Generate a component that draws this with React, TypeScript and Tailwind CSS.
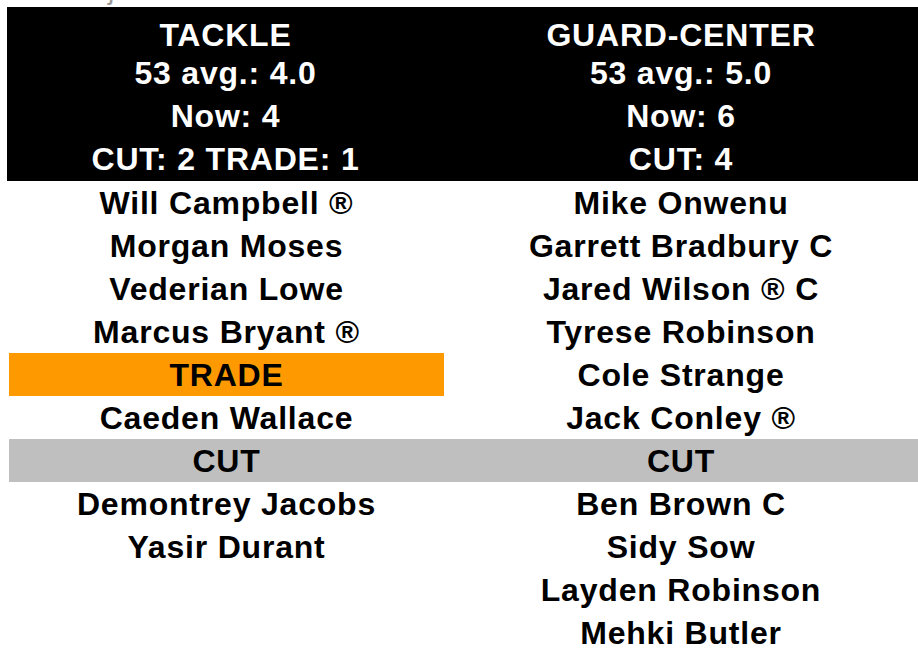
const header = [
  ["TACKLE", "GUARD-CENTER"],
  ["53 avg.: 4.0", "53 avg.: 5.0"],
  ["Now: 4", "Now: 6"],
  ["CUT: 2 TRADE: 1", "CUT: 4"],
];

type Cell = { text: string; tone?: "trade" | "cut" };

const rows: [Cell, Cell][] = [
  [{ text: "Will Campbell ®" }, { text: "Mike Onwenu" }],
  [{ text: "Morgan Moses" }, { text: "Garrett Bradbury C" }],
  [{ text: "Vederian Lowe" }, { text: "Jared Wilson ® C" }],
  [{ text: "Marcus Bryant ®" }, { text: "Tyrese Robinson" }],
  [{ text: "TRADE", tone: "trade" }, { text: "Cole Strange" }],
  [{ text: "Caeden Wallace" }, { text: "Jack Conley ®" }],
  [{ text: "CUT", tone: "cut" }, { text: "CUT", tone: "cut" }],
  [{ text: "Demontrey Jacobs" }, { text: "Ben Brown C" }],
  [{ text: "Yasir Durant" }, { text: "Sidy Sow" }],
  [{ text: "" }, { text: "Layden Robinson" }],
  [{ text: "" }, { text: "Mehki Butler" }],
];

function BodyCell({ cell }: { cell: Cell }) {
  const bg =
    cell.tone === "trade"
      ? "bg-[#ff9900]"
      : cell.tone === "cut"
      ? "bg-[#bfbfbf]"
      : "bg-white";
  return (
    <div className={`${bg} h-[43px] flex items-center justify-center whitespace-nowrap`}>
      {cell.text}
    </div>
  );
}

export default function App() {
  return (
    <div
      className="w-[918px] h-[658px] overflow-hidden bg-white text-black font-bold text-[32px] tracking-[0.8px]"
      style={{ fontFamily: '"Liberation Sans", Arial, sans-serif' }}
    >
      {/* tail of the sheet title, cut off above */}
      <div className="h-[7px] overflow-hidden">
        <div className="-mt-[26px] pl-[62px] text-[28px] leading-[32px] font-normal text-[#9a9a9a] whitespace-nowrap">
          Projected Offensive Line Roster
        </div>
      </div>

      <div className="ml-[7px] bg-black text-white">
        {header.map(([l, r], i) => (
          <div
            key={i}
            className={`grid grid-cols-[437px_1fr] ${i === 0 ? "pt-[12px] leading-[33px]" : "leading-[43px]"}`}
          >
            <div className="text-center whitespace-nowrap">{l}</div>
            <div className="text-center whitespace-nowrap">{r}</div>
          </div>
        ))}
      </div>

      <div className="ml-[9px]">
        {rows.map(([l, r], i) => (
          <div key={i} className="grid grid-cols-[435px_1fr]">
            <BodyCell cell={l} />
            <BodyCell cell={r} />
          </div>
        ))}
      </div>
    </div>
  );
}
